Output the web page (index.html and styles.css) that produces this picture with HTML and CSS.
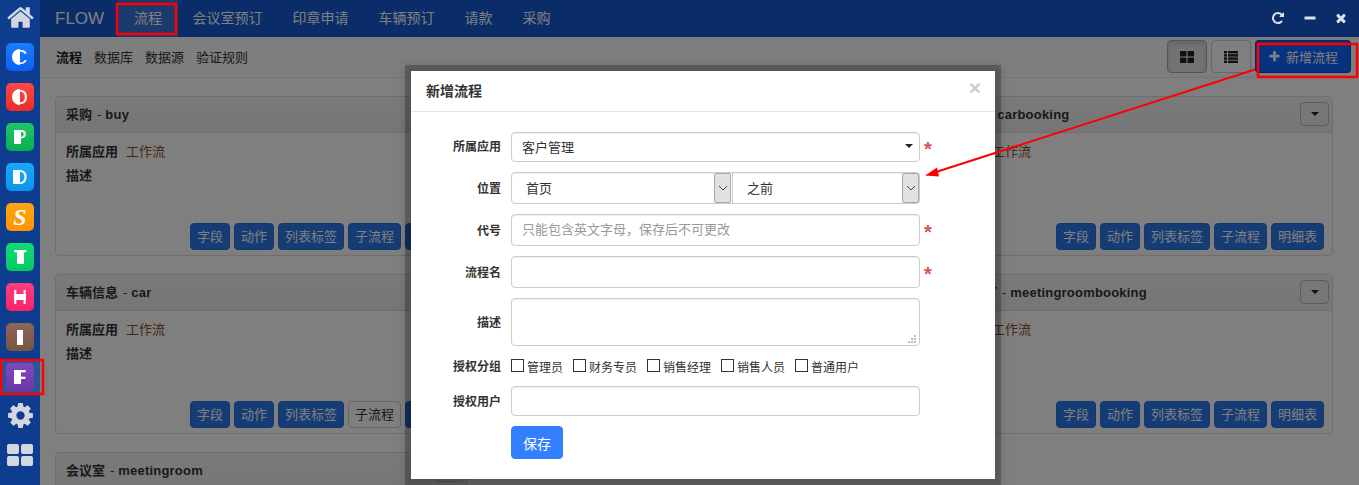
FILE: index.html
```html
<!DOCTYPE html>
<html lang="zh">
<head>
<meta charset="utf-8">
<title>FLOW</title>
<link rel="stylesheet" href="styles.css">
</head>
<body>
<div class="app">
  <aside class="sidebar">
    <a class="side-home"><svg viewBox="0 0 1792 1792" class="ico-home"><path d="M1472 992v480q0 26-19 45t-45 19h-384v-384h-256v384h-384q-26 0-45-19t-19-45v-480q0-1 .5-3t.5-3l575-474 575 474q1 2 1 6zm223-69l-62 74q-8 9-21 11h-3q-13 0-21-7l-692-577-692 577q-12 8-24 7-13-2-21-11l-62-74q-8-10-7-23.5t11-21.5l719-599q32-26 76-26t76 26l244 204v-195q0-14 9-23t23-9h192q14 0 23 9t9 23v408l219 182q10 8 11 21.5t-7 23.5z"/></svg></a>
    <a class="side-item"><span class="tile t-c">C</span></a>
    <a class="side-item"><span class="tile t-o">O</span></a>
    <a class="side-item"><span class="tile t-p">P</span></a>
    <a class="side-item"><span class="tile t-d">D</span></a>
    <a class="side-item"><span class="tile t-s">S</span></a>
    <a class="side-item"><span class="tile t-t">T</span></a>
    <a class="side-item"><span class="tile t-h">H</span></a>
    <a class="side-item"><span class="tile t-i">I</span></a>
    <a class="side-item is-active"><span class="tile t-f">F</span></a>
    <a class="side-tool"><svg viewBox="0 0 1792 1792" class="ico-gear"><path d="M1152 896q0-106-75-181t-181-75-181 75-75 181 75 181 181 75 181-75 75-181zm512-109v222q0 12-8 23t-20 13l-185 28q-19 54-39 91 35 50 107 138 10 12 10 25t-9 23q-27 37-99 108t-94 71q-12 0-26-9l-138-108q-44 23-91 38-16 136-29 186-7 28-36 28h-222q-14 0-24.5-8.5t-11.5-21.5l-28-184q-49-16-90-37l-141 107q-10 9-25 9-14 0-25-11-126-114-165-168-7-10-7-23 0-12 8-23 15-21 51-66.5t54-70.5q-27-50-41-99l-183-27q-13-2-21-12.5t-8-23.5v-222q0-12 8-23t19-13l186-28q14-46 39-92-40-57-107-138-10-12-10-24 0-10 9-23 26-36 98.5-107.5t94.5-71.5q13 0 26 10l138 107q44-23 91-38 16-136 29-186 7-28 36-28h222q14 0 24.5 8.5t11.5 21.5l28 184q49 16 90 37l142-107q9-9 24-9 13 0 25 10 129 119 165 170 7 8 7 22 0 12-8 23-15 21-51 66.5t-54 70.5q26 50 41 98l183 28q13 2 21 12.5t8 23.5z"/></svg></a>
    <a class="side-tool"><svg viewBox="0 0 26 22" class="ico-grid"><rect x="0" y="0" width="12" height="10" rx="2"/><rect x="14" y="0" width="12" height="10" rx="2"/><rect x="0" y="12" width="12" height="10" rx="2"/><rect x="14" y="12" width="12" height="10" rx="2"/></svg></a>
  </aside>

  <main class="main">
    <header class="topbar">
      <span class="brand">FLOW</span>
      <nav class="topnav">
        <a class="topnav-item is-active">流程</a>
        <a class="topnav-item">会议室预订</a>
        <a class="topnav-item">印章申请</a>
        <a class="topnav-item">车辆预订</a>
        <a class="topnav-item">请款</a>
        <a class="topnav-item">采购</a>
      </nav>
      <div class="win-tools">
        <svg viewBox="0 0 1792 1792" class="win-ico"><path d="M1664 256v448q0 26-19 45t-45 19h-448q-42 0-59-40-17-39 14-69l138-138q-148-137-349-137-104 0-198.5 40.5t-163.5 109.5-109.5 163.5-40.5 198.5 40.5 198.5 109.5 163.5 163.5 109.5 198.5 40.5q119 0 225-52t179-147q7-10 23-12 15 0 25 9l137 138q9 8 9.5 20.5t-7.5 22.5q-109 132-264 204.5t-327 72.5q-156 0-298-61t-245-164-164-245-61-298 61-298 164-245 245-164 298-61q147 0 284.5 55.5t244.5 156.5l130-129q29-31 70-14 39 17 39 59z"/></svg>
        <svg viewBox="0 0 14 14" class="win-ico"><rect x="1.5" y="5.6" width="11" height="3" rx=".5"/></svg>
        <svg viewBox="0 0 1792 1792" class="win-ico"><path d="M1490 1322q0 40-28 68l-136 136q-28 28-68 28t-68-28l-294-294-294 294q-28 28-68 28t-68-28l-136-136q-28-28-28-68t28-68l294-294-294-294q-28-28-28-68t28-68l136-136q28-28 68-28t68 28l294 294 294-294q28-28 68-28t68 28l136 136q28 28 28 68t-28 68l-294 294 294 294q28 28 28 68z"/></svg>
      </div>
    </header>

    <div class="subbar">
      <nav class="subnav">
        <a class="subnav-item is-active">流程</a>
        <a class="subnav-item">数据库</a>
        <a class="subnav-item">数据源</a>
        <a class="subnav-item">验证规则</a>
      </nav>
      <div class="subbar-actions">
        <button class="btn-view is-on"><svg viewBox="0 0 14 12" class="view-ico"><rect x="0" y="0" width="6.4" height="5.4"/><rect x="7.6" y="0" width="6.4" height="5.4"/><rect x="0" y="6.6" width="6.4" height="5.4"/><rect x="7.6" y="6.6" width="6.4" height="5.4"/></svg></button>
        <button class="btn-view"><svg viewBox="0 0 14 12" class="view-ico"><rect x="0" y="0" width="3" height="2.4"/><rect x="4" y="0" width="10" height="2.4"/><rect x="0" y="3.2" width="3" height="2.4"/><rect x="4" y="3.2" width="10" height="2.4"/><rect x="0" y="6.4" width="3" height="2.4"/><rect x="4" y="6.4" width="10" height="2.4"/><rect x="0" y="9.6" width="3" height="2.4"/><rect x="4" y="9.6" width="10" height="2.4"/></svg></button>
        <button class="btn-new"><svg viewBox="0 0 1792 1792" class="plus-ico"><path d="M1600 736v192q0 40-28 68t-68 28h-416v416q0 40-28 68t-68 28h-192q-40 0-68-28t-28-68v-416h-416q-40 0-68-28t-28-68v-192q0-40 28-68t68-28h416v-416q0-40 28-68t68-28h192q40 0 68 28t28 68v416h416q40 0 68 28t28 68z"/></svg>新增流程</button>
      </div>
    </div>

    <section class="cards">
      <article class="card">
        <div class="card-head"><span class="card-title">采购<span class="card-dash">-</span><span class="card-code">buy</span></span><button class="btn-caret"><i class="caret"></i></button></div>
        <div class="card-body">
          <p class="meta"><b>所属应用</b><span class="meta-app">工作流</span></p>
          <p class="meta"><b>描述</b></p>
          <div class="card-btns"><a class="btn">字段</a><a class="btn">动作</a><a class="btn">列表标签</a><a class="btn">子流程</a><a class="btn">明细表</a></div>
        </div>
      </article>
      <article class="card">
        <div class="card-head"><span class="card-title">请款<span class="card-dash">-</span><span class="card-code">payment</span></span><button class="btn-caret"><i class="caret"></i></button></div>
        <div class="card-body">
          <p class="meta"><b>所属应用</b><span class="meta-app">工作流</span></p>
          <p class="meta"><b>描述</b></p>
          <div class="card-btns"><a class="btn">字段</a><a class="btn">动作</a><a class="btn">列表标签</a><a class="btn">子流程</a><a class="btn">明细表</a></div>
        </div>
      </article>
      <article class="card">
        <div class="card-head"><span class="card-title">车辆预订<span class="card-dash">-</span><span class="card-code">carbooking</span></span><button class="btn-caret"><i class="caret"></i></button></div>
        <div class="card-body">
          <p class="meta"><b>所属应用</b><span class="meta-app">工作流</span></p>
          <p class="meta"><b>描述</b></p>
          <div class="card-btns"><a class="btn">字段</a><a class="btn">动作</a><a class="btn">列表标签</a><a class="btn">子流程</a><a class="btn">明细表</a></div>
        </div>
      </article>
      <article class="card">
        <div class="card-head"><span class="card-title">车辆信息<span class="card-dash">-</span><span class="card-code">car</span></span><button class="btn-caret"><i class="caret"></i></button></div>
        <div class="card-body">
          <p class="meta"><b>所属应用</b><span class="meta-app">工作流</span></p>
          <p class="meta"><b>描述</b></p>
          <div class="card-btns"><a class="btn">字段</a><a class="btn">动作</a><a class="btn">列表标签</a><a class="btn btn-plain">子流程</a><a class="btn">明细表</a></div>
        </div>
      </article>
      <article class="card">
        <div class="card-head"><span class="card-title">印章申请<span class="card-dash">-</span><span class="card-code">seal</span></span><button class="btn-caret"><i class="caret"></i></button></div>
        <div class="card-body">
          <p class="meta"><b>所属应用</b><span class="meta-app">工作流</span></p>
          <p class="meta"><b>描述</b></p>
          <div class="card-btns"><a class="btn">字段</a><a class="btn">动作</a><a class="btn">列表标签</a><a class="btn">子流程</a><a class="btn">明细表</a></div>
        </div>
      </article>
      <article class="card">
        <div class="card-head"><span class="card-title">会议室预订<span class="card-dash">-</span><span class="card-code">meetingroombooking</span></span><button class="btn-caret"><i class="caret"></i></button></div>
        <div class="card-body">
          <p class="meta"><b>所属应用</b><span class="meta-app">工作流</span></p>
          <p class="meta"><b>描述</b></p>
          <div class="card-btns"><a class="btn">字段</a><a class="btn">动作</a><a class="btn">列表标签</a><a class="btn">子流程</a><a class="btn">明细表</a></div>
        </div>
      </article>
      <article class="card">
        <div class="card-head"><span class="card-title">会议室<span class="card-dash">-</span><span class="card-code">meetingroom</span></span><button class="btn-caret"><i class="caret"></i></button></div>
      </article>
    </section>

    <div class="backdrop"></div>

    <div class="modal">
      <div class="modal-head">
        <h4 class="modal-title">新增流程</h4>
        <span class="modal-close">×</span>
      </div>
      <form class="modal-body">
        <div class="row row-30">
          <label class="row-label row-label-top">所属应用</label>
          <div class="select-box"><span>客户管理</span><i class="caret caret-sel"></i></div>
          <span class="req">*</span>
        </div>
        <div class="row row-32">
          <label class="row-label">位置</label>
          <div class="select-pair">
            <div class="native-sel"><span>首页</span><b class="sel-arrow"><svg viewBox="0 0 10 6" class="chev"><path d="M1 1l4 4 4-4"/></svg></b></div>
            <div class="native-sel"><span>之前</span><b class="sel-arrow"><svg viewBox="0 0 10 6" class="chev"><path d="M1 1l4 4 4-4"/></svg></b></div>
          </div>
        </div>
        <div class="row row-32">
          <label class="row-label">代号</label>
          <input class="field" type="text" placeholder="只能包含英文字母，保存后不可更改">
          <span class="req">*</span>
        </div>
        <div class="row row-32">
          <label class="row-label">流程名</label>
          <input class="field" type="text">
          <span class="req">*</span>
        </div>
        <div class="row row-48">
          <label class="row-label">描述</label>
          <div class="area-wrap">
            <textarea class="field field-area"></textarea>
            <svg viewBox="0 0 8 8" class="grip"><rect x="6" y="0" width="2" height="2"/><rect x="3" y="3" width="2" height="2"/><rect x="6" y="3" width="2" height="2"/><rect x="0" y="6" width="2" height="2"/><rect x="3" y="6" width="2" height="2"/><rect x="6" y="6" width="2" height="2"/></svg>
          </div>
        </div>
        <div class="row row-20">
          <label class="row-label">授权分组</label>
          <div class="checks">
            <label class="check"><input type="checkbox"><span>管理员</span></label>
            <label class="check"><input type="checkbox"><span>财务专员</span></label>
            <label class="check"><input type="checkbox"><span>销售经理</span></label>
            <label class="check"><input type="checkbox"><span>销售人员</span></label>
            <label class="check"><input type="checkbox"><span>普通用户</span></label>
          </div>
        </div>
        <div class="row row-30">
          <label class="row-label">授权用户</label>
          <input class="field" type="text">
        </div>
        <div class="row row-33">
          <span class="row-label"></span>
          <button class="btn-save" type="button">保存</button>
        </div>
      </form>
    </div>
  </main>

  <svg class="marks" viewBox="0 0 1359 485">
    <rect x="117" y="4" width="59" height="30"/>
    <rect x="1" y="360" width="42" height="34"/>
    <rect x="1258" y="44" width="99" height="33"/>
    <line x1="1255" y1="69.5" x2="936" y2="172"/>
    <polygon points="925,175.5 937,167.5 939,176.5"/>
  </svg>
</div>
</body>
</html>
```
FILE: styles.css
```css
* { box-sizing: border-box; }
html, body { margin: 0; height: 100%; overflow: hidden; }
body {
  font-family: "Liberation Sans", "Noto Sans CJK SC", sans-serif;
  font-size: 13px;
  color: #333;
  background: #fff;
}
p, h4 { margin: 0; }
.app { position: relative; display: flex; width: 1359px; height: 485px; overflow: hidden; }

/* sidebar */
.sidebar {
  position: relative;
  z-index: 5;
  flex: 0 0 40px;
  display: flex;
  flex-direction: column;
  align-items: center;
  background: #0e3c8e;
}
.side-home { height: 33px; padding-top: 3px; display: block; }
.ico-home { width: 29px; height: 29px; fill: #d3d7e2; display: block; }
.side-item {
  width: 40px;
  height: 34px;
  margin-top: 6px;
  display: flex;
  align-items: center;
  justify-content: center;
}
.side-home + .side-item { margin-top: 7px; }
.side-item.is-active { background: #2b5596; }
.tile {
  position: relative;
  width: 28px;
  height: 28px;
  border-radius: 5px;
  display: flex;
  align-items: center;
  justify-content: center;
  color: #fff;
  font-family: "Liberation Sans", sans-serif;
  font-size: 20px;
  line-height: 1;
}
.tile::before { content: ""; position: absolute; background: #fff; }
.t-c { background: linear-gradient(#1a7dff, #0a62f0); }
.t-c::before { left: 6px; top: 6px; width: 8px; height: 16px; border-radius: 8px 0 0 8px; }
.t-o { background: linear-gradient(#ff4a42, #ee2a2a); }
.t-o::before { left: 6px; top: 6px; width: 8px; height: 16px; border-radius: 8px 0 0 8px; }
.t-p { background: linear-gradient(#1fc667, #0bae52); }
.t-p::before { left: 8px; top: 7px; width: 7px; height: 14px; }
.t-d { background: linear-gradient(#1aa8fa, #0a95ea); }
.t-d::before { left: 7px; top: 7px; width: 7px; height: 14px; }
.t-s { background: linear-gradient(#ffa510, #ff9500); font-family: "Liberation Serif", serif; font-style: italic; font-weight: 700; font-size: 24px; }
.t-s::before { display: none; }
.t-t { background: linear-gradient(#10dc75, #06c862); font-weight: 700; }
.t-t::before { left: 11px; top: 7px; width: 7px; height: 14px; }
.t-h { background: linear-gradient(#ff3d7d, #f5256a); }
.t-h::before { left: 8px; top: 11px; width: 12px; height: 6px; }
.t-i { background: linear-gradient(#8d6655, #7a5443); }
.t-i::before { left: 11px; top: 7px; width: 6px; height: 15px; }
.t-f { background: linear-gradient(#8048bd, #6d38ab); font-weight: 700; }
.t-f::before { left: 8px; top: 7px; width: 7px; height: 14px; }
.side-tool { display: flex; align-items: center; justify-content: center; width: 40px; height: 40px; }
.side-item.is-active + .side-tool { margin-top: 1px; }
.ico-gear { width: 29px; height: 29px; fill: #d3d7e2; }
.ico-grid { width: 26px; height: 22px; fill: #d3d7e2; }

/* main */
.main { position: relative; flex: 1; min-width: 0; height: 485px; overflow: hidden; background: #fff; }
.topbar {
  height: 37px;
  display: flex;
  align-items: stretch;
  background: #145ad4;
  color: #fff;
}
.brand { padding: 0 14px 0 15px; font-size: 17px; line-height: 37px; }
.topnav { display: flex; }
.topnav-item { padding: 0 15px; font-size: 14px; line-height: 36px; }
.topnav-item.is-active { background: rgba(255,255,255,.16); width: 59.5px; padding-left: 16px; }
.win-tools {
  position: relative;
  z-index: 4;
  margin-left: auto;
  display: flex;
  align-items: center;
  gap: 17.5px;
  padding: 0 11px 2px 0;
}
.win-ico { width: 14px; height: 14px; fill: #dfe2e8; }

.subbar {
  height: 41px;
  display: flex;
  align-items: center;
  justify-content: space-between;
  padding: 0 8px 0 16px;
  border-bottom: 1px solid #e9e9e9;
  background: #fdfdfd;
}
.subnav { display: flex; gap: 12px; margin-top: -1px; }
.subnav-item { font-size: 13px; color: #333; }
.subnav-item.is-active { font-weight: 700; color: #222; }
.subbar-actions { display: flex; align-items: center; gap: 4px; margin-top: -1px; }
.btn-view {
  width: 40px;
  height: 33px;
  border: 1px solid #ccc;
  border-radius: 4px;
  background: #fff;
  display: flex;
  align-items: center;
  justify-content: center;
  padding: 0;
}
.btn-view.is-on { background: #e6e6e6; border-color: #adadad; box-shadow: inset 0 3px 5px rgba(0,0,0,.125); }
.view-ico { width: 14px; height: 12px; fill: #222; }
.btn-new {
  width: 96px;
  height: 33px;
  border: 1px dotted #0b2f77;
  border-radius: 4px;
  background: #0e64ff;
  color: #fff;
  font: 13px "Liberation Sans", "Noto Sans CJK SC", sans-serif;
  display: flex;
  align-items: center;
  justify-content: center;
  gap: 5px;
  padding: 0;
}
.plus-ico { width: 13px; height: 13px; fill: #fff; }

/* cards */
.cards {
  display: grid;
  grid-template-columns: repeat(3, 412px);
  column-gap: 21px;
  row-gap: 18px;
  padding: 18px 0 0 15px;
  align-items: start;
}
.card { height: 160px; background: #fff; border: 1px solid #ddd; border-radius: 4px; }
.card-head {
  height: 36px;
  display: flex;
  align-items: center;
  justify-content: space-between;
  padding: 0 3px 2px 10px;
  background: linear-gradient(#f5f5f5, #ececec);
  border-bottom: 1px solid #ddd;
  border-radius: 4px 4px 0 0;
}
.card-title { font-weight: 700; font-size: 13px; color: #333; }
.card-dash { font-weight: 400; margin: 0 4px 0 5px; }
.card-code { letter-spacing: .2px; }
.btn-caret {
  width: 29px;
  height: 24px;
  border: 1px solid #bbb;
  border-radius: 4px;
  background: #eee;
  display: flex;
  align-items: center;
  justify-content: center;
  padding: 0;
}
.caret { display: block; width: 0; height: 0; border-style: solid; border-width: 4px 4px 0; border-color: #222 transparent transparent; }
.card-body { padding: 7px 8px 0 10px; height: 122px; display: flex; flex-direction: column; }
.meta { line-height: 24px; font-size: 13px; }
.meta b { color: #333; }
.meta-app { margin-left: 8px; color: #8f4f1e; }
.card-btns { margin-top: auto; margin-bottom: 5px; display: flex; justify-content: flex-end; gap: 4px; }
.btn {
  height: 27px;
  padding: 0 6px;
  line-height: 25px;
  border: 1px solid #2570dc;
  border-radius: 4px;
  background: #2b78ea;
  color: #fff;
  font-size: 13px;
}
.btn-plain { background: #fff; border-color: #ccc; color: #333; }

/* overlay */
.backdrop { position: absolute; inset: 0; z-index: 2; background: rgba(0,0,0,.5); }
.modal {
  position: absolute;
  z-index: 3;
  left: 371px;
  top: 71px;
  width: 584px;
  height: 408px;
  background: #fff;
  box-shadow: 0 0 0 6px rgba(0,0,0,.22), 0 0 8px 7px rgba(0,0,0,.12);
}
.modal-head {
  height: 41px;
  position: relative;
  display: flex;
  align-items: center;
  padding: 0 15px 2px;
  border-bottom: 1px solid #e5e5e5;
}
.modal-title { font-size: 14px; font-weight: 700; color: #333; margin-top: -1px; }
.modal-close {
  position: absolute;
  right: 14px;
  top: 5px;
  color: #ccc;
  font: 700 21px/24px "Liberation Sans", sans-serif;
}
.modal-body { padding: 20px 0 0; display: flex; flex-direction: column; gap: 10px; }
.row { display: flex; align-items: center; }
.row-20 { height: 20px; }
.row-30 { height: 30px; }
.row-32 { height: 32px; }
.row-33 { height: 33px; }
.row-48 { height: 48px; }
.row-label { width: 90px; margin-right: 10px; padding-bottom: 2px; text-align: right; font-size: 12px; font-weight: 700; color: #333; flex: none; }
.row-label-top { padding-bottom: 4px; }
.select-box, .field, .select-pair {
  width: 409px;
  height: 100%;
  border: 1px solid #ccc;
  border-radius: 4px;
  background: #fff;
  box-shadow: inset 0 1px 1px rgba(0,0,0,.075);
  font: 13px "Liberation Sans", "Noto Sans CJK SC", sans-serif;
  color: #333;
}
.select-box { display: flex; align-items: center; justify-content: space-between; padding: 0 6px 2px 10px; }
.caret-sel { margin-top: 0; }
.field { padding: 0 10px 2px; outline: none; }
.field::placeholder { color: #999; }
.area-wrap { position: relative; width: 409px; height: 100%; }
.field-area { resize: none; padding: 6px 10px; display: block; }
.grip { position: absolute; right: 4px; bottom: 3px; width: 8px; height: 8px; fill: #bbb; }
.req { margin-left: 4px; color: #d9534f; font-size: 20px; font-weight: 700; line-height: 18px; padding-top: 4px; }
.select-pair { display: flex; }
.native-sel { display: flex; align-items: center; justify-content: space-between; padding-left: 14px; flex: none; height: 100%; }
.native-sel span { margin-top: -2px; }
.native-sel:first-child { width: 220px; padding-right: 1px; }
.native-sel:last-child { width: 187px; border-left: 1px solid #ccc; }
.sel-arrow { width: 17px; height: 100%; background: #e1e1e1; border: 1px solid #a9a9a9; border-radius: 2px; display: flex; align-items: center; justify-content: center; }
.chev { width: 10px; height: 6px; fill: none; stroke: #444; stroke-width: 1; }
.checks { display: flex; gap: 10px; font-size: 12px; }
.check { display: flex; align-items: center; gap: 3px; color: #333; }
.check input { appearance: none; -webkit-appearance: none; margin: 0 0 2px; width: 13px; height: 13px; border: 1px solid #333; background: #fff; border-radius: 0; }
.btn-save {
  width: 52px;
  height: 33px;
  padding: 0;
  border: 1px solid #2e7ef0;
  border-radius: 4px;
  background: #337fff;
  color: #fff;
  font: 14px "Liberation Sans", "Noto Sans CJK SC", sans-serif;
}

/* annotation layer */
.marks { position: absolute; left: 0; top: 0; width: 1359px; height: 485px; z-index: 10; pointer-events: none; }
.marks rect { fill: none; stroke: #f00; stroke-width: 2.5; }
.marks line { stroke: #f00; stroke-width: 2; }
.marks polygon { fill: #f00; }
```
